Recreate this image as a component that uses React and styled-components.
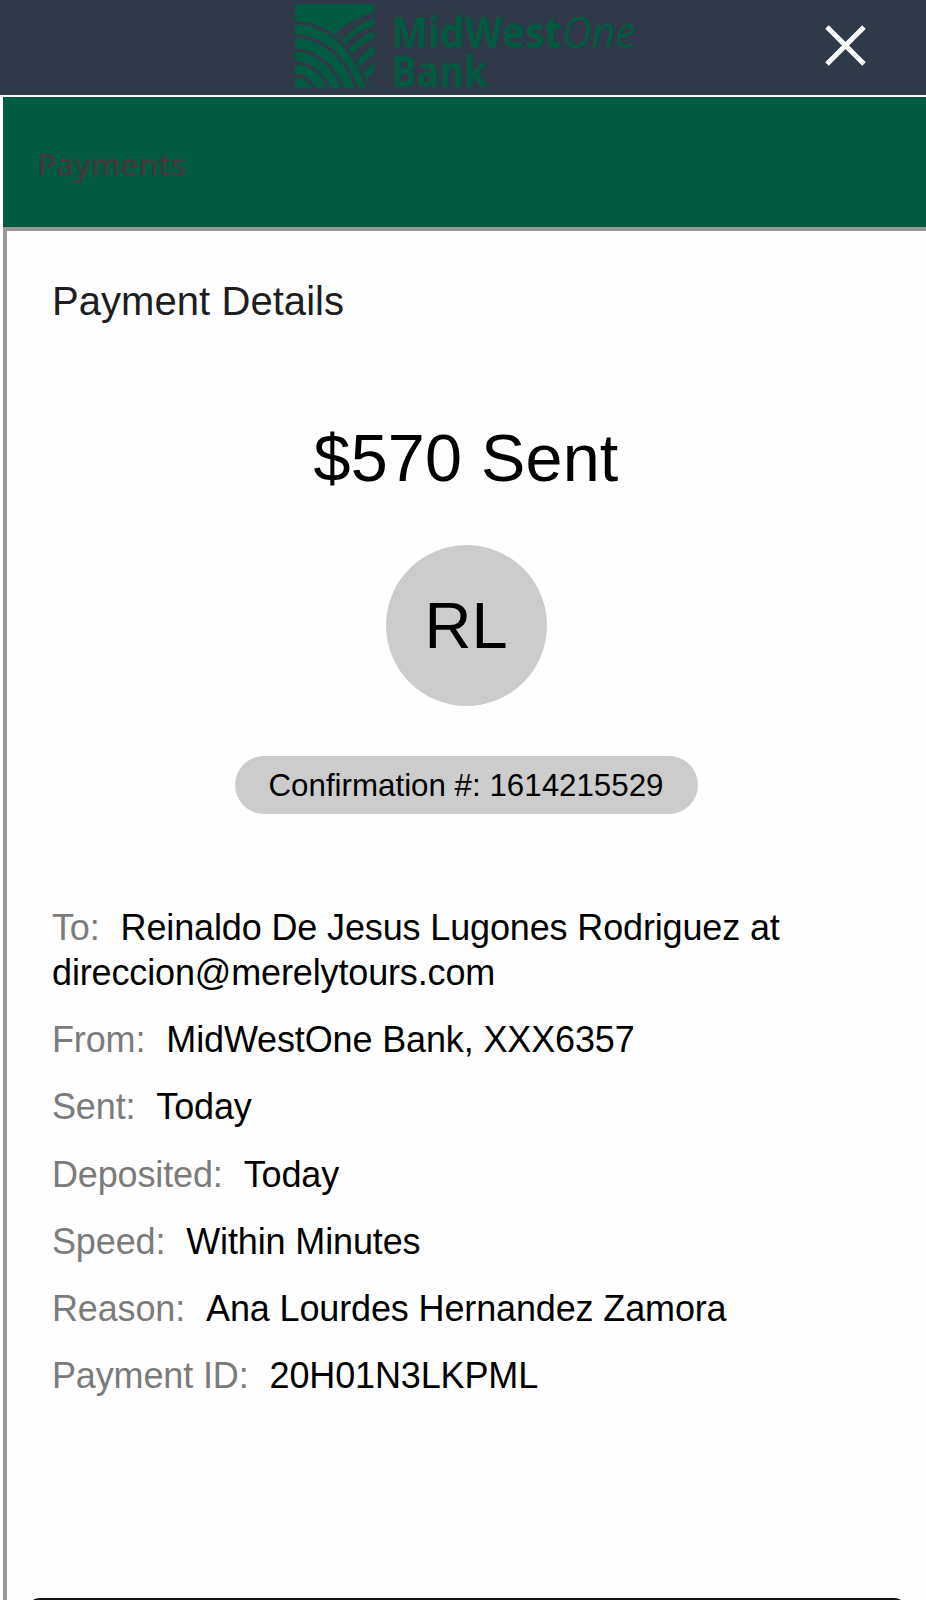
import React from "react";
import styled, { createGlobalStyle } from "styled-components";

const GlobalStyle = createGlobalStyle`
  * { box-sizing: border-box; }
  body { margin: 0; background: #fefefe; }
`;

const Page = styled.div`
  display: flex;
  flex-direction: column;
  width: 926px;
  height: 1600px;
  overflow: hidden;
  background: #fefefe;
  font-family: "Liberation Sans", Arial, sans-serif;
  color: #000;
`;

const Header = styled.header`
  display: grid;
  grid-template-columns: 295px 1fr auto;
  flex: none;
  height: 97px;
  padding-right: 60px;
  background: #303947;
  border-bottom: 2px solid #f8f5fa;
`;

const Logo = styled.svg`
  grid-column: 2;
  display: block;
  width: 345px;
  height: 95px;
  font-family: "Open Sans", "Noto Sans", sans-serif;
  font-size: 43.5px;
  fill: #025a40;
`;

const CloseButton = styled.button`
  display: flex;
  align-self: start;
  margin-top: 25px;
  padding: 0;
  border: 0;
  background: none;
  color: #fff;
`;

const Frame = styled.main`
  display: flex;
  flex: 1;
  flex-direction: column;
  margin-left: 3px;
`;

const Banner = styled.div`
  display: flex;
  align-items: center;
  flex: none;
  height: 130px;
  padding: 3px 0 0 34px;
  background: #025a40;
  color: #41393b;
  font: 500 31px "Noto Sans", "Open Sans", sans-serif;
  letter-spacing: 0.3px;
`;

const Panel = styled.section`
  display: flex;
  flex: 1;
  flex-direction: column;
  border: solid #979797;
  border-width: 4px 0 0 4px;
  padding: 47px 0 0 45px;
`;

const Title = styled.h1`
  margin: 0;
  font-size: 40px;
  font-weight: 400;
  line-height: 46px;
  letter-spacing: 0.06px;
  color: #1d1d1f;
`;

const Summary = styled.div`
  display: flex;
  flex-direction: column;
  align-items: center;
  width: 828px;
  margin-top: 96px;
`;

const Amount = styled.div`
  font-size: 66.5px;
  line-height: 76px;
  letter-spacing: 0.2px;
`;

const Avatar = styled.div`
  display: flex;
  align-items: center;
  justify-content: center;
  width: 161px;
  height: 161px;
  margin-top: 49px;
  border-radius: 50%;
  background: #ccc;
  font-size: 65px;
`;

const Confirmation = styled.div`
  width: 463px;
  height: 58px;
  margin-top: 50px;
  border-radius: 29px;
  background: #ccc;
  font-size: 31.3px;
  line-height: 59px;
  text-align: center;
`;

const Details = styled.dl`
  display: flex;
  flex-direction: column;
  gap: 22.2px;
  width: 780px;
  margin: 91px 0 0;
  font-size: 36px;
  line-height: 45px;
  letter-spacing: -0.14px;
`;

const Label = styled.dt`
  display: inline;
  margin-right: 21px;
  color: #7b7b7b;
`;

const Value = styled.dd`
  display: inline;
  margin: 0;
`;

const BottomButton = styled.button`
  flex: none;
  width: 882px;
  height: 60px;
  margin: auto 0 -58px -26px;
  border: 0;
  border-radius: 14px;
  background: #111118;
`;

const details = [
  ["To:", "Reinaldo De Jesus Lugones Rodriguez at direccion@merelytours.com"],
  ["From:", "MidWestOne Bank, XXX6357"],
  ["Sent:", "Today"],
  ["Deposited:", "Today"],
  ["Speed:", "Within Minutes"],
  ["Reason:", "Ana Lourdes Hernandez Zamora"],
  ["Payment ID:", "20H01N3LKPML"],
];

function BankLogo() {
  return (
    <Logo viewBox="0 0 345 95">
      <svg x="-0.3" y="4" width="80" height="84" viewBox="45 10 240 253" preserveAspectRatio="none">
        <rect x="45" y="10" width="240" height="253" />
        <g fill="none" stroke="#303947" strokeWidth="10">
          <path d="M45 66C150 70 230 150 265 268" />
          <path d="M45 106C130 110 200 170 232 268" />
          <path d="M45 149C110 150 165 200 190 268" />
          <path d="M45 187C90 188 130 215 150 268" />
          <path d="M45 226C75 227 95 245 105 268" />
        </g>
        <path
          fill="#303947"
          d="M168 100Q215 50 285 34V53Q230 70 188 117L180 112ZM198 130Q232 90 285 75V91Q244 104 209 144ZM220 160Q246 126 285 112V137Q261 143 238 178ZM245 196Q260 170 285 162V186Q269 194 259 214ZM264 230Q274 217 285 213V263H271Z"
        />
        <path d="M280 263Q279 248 285 240V263Z" />
      </svg>
      <text x="96.5" y="47.5" fontWeight="700" textLength="170" lengthAdjust="spacingAndGlyphs">MidWest</text>
      <text x="267" y="47.5" fontWeight="400" fontStyle="italic" textLength="74" lengthAdjust="spacingAndGlyphs">One</text>
      <text x="96.5" y="87" fontWeight="700" textLength="96" lengthAdjust="spacingAndGlyphs">Bank</text>
      <circle cx="195" cy="84" r="1.2" />
    </Logo>
  );
}

export default function App() {
  return (
    <Page>
      <GlobalStyle />
      <Header>
        <BankLogo />
        <CloseButton aria-label="Close">
          <svg width="41" height="41" viewBox="0 0 41 41" stroke="currentColor" strokeWidth="5">
            <path d="M2 2L39 39M39 2L2 39" />
          </svg>
        </CloseButton>
      </Header>
      <Frame>
        <Banner>Payments</Banner>
        <Panel>
          <Title>Payment Details</Title>
          <Summary>
            <Amount>$570 Sent</Amount>
            <Avatar>RL</Avatar>
            <Confirmation>Confirmation #: 1614215529</Confirmation>
          </Summary>
          <Details>
            {details.map(([label, value]) => (
              <div key={label}>
                <Label>{label}</Label>
                <Value>{value}</Value>
              </div>
            ))}
          </Details>
          <BottomButton aria-label="Continue" />
        </Panel>
      </Frame>
    </Page>
  );
}
